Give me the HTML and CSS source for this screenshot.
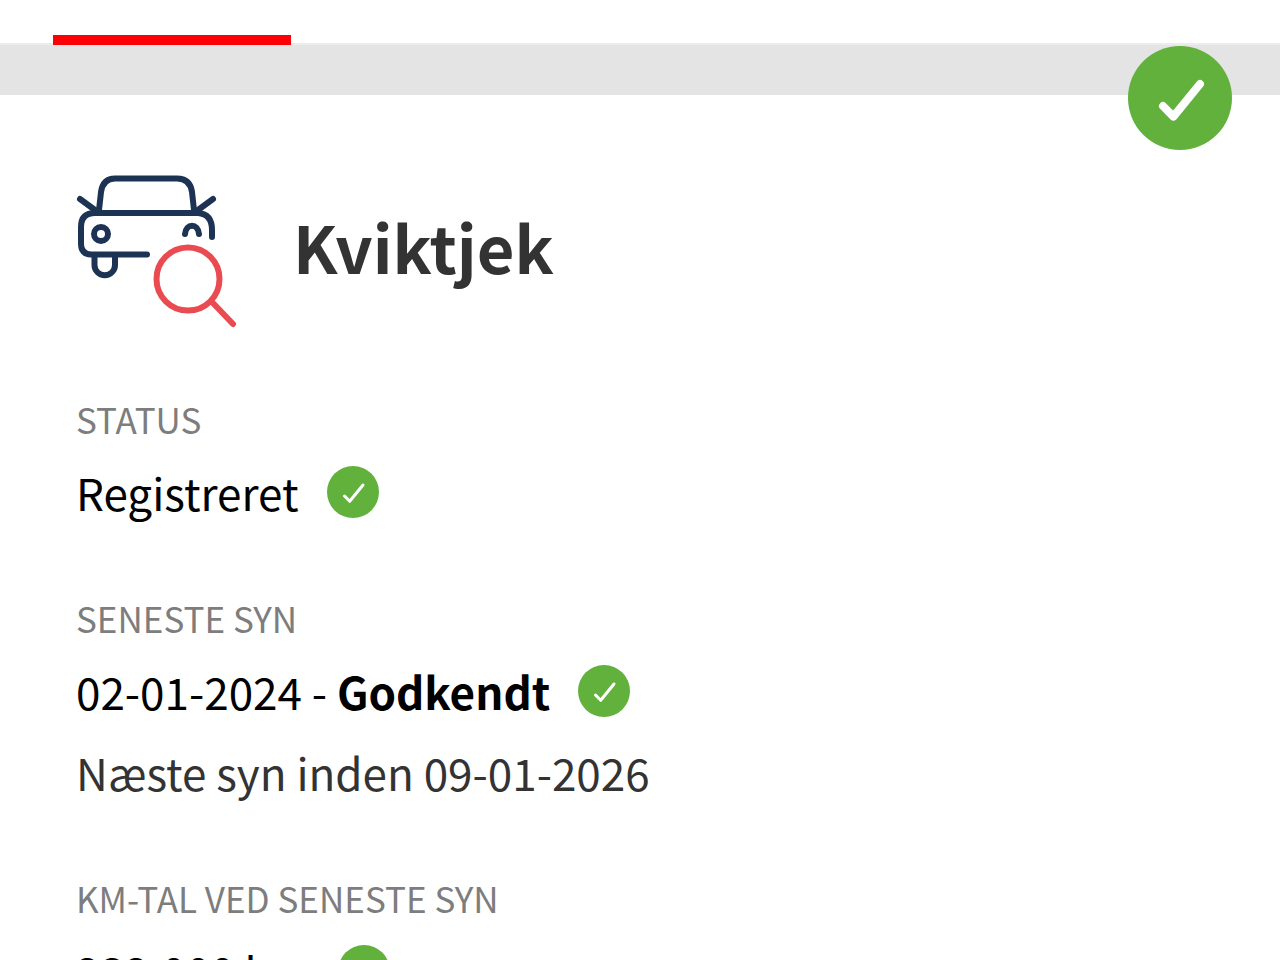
FILE: index.html
```
<!DOCTYPE html>
<html lang="da">
<head>
<meta charset="utf-8">
<meta name="viewport" content="width=device-width, initial-scale=1">
<title>Kviktjek</title>
<link rel="stylesheet" href="styles.css">
</head>
<body>
<svg class="symbols" aria-hidden="true">
  <symbol id="check" viewBox="0 0 52 52">
    <circle cx="26" cy="26" r="26"/>
    <path d="M17.5 30 L22.7 35.3 L36 19" fill="none" stroke="#fff" stroke-linecap="round" stroke-linejoin="round"/>
  </symbol>
</svg>
<div class="tabs"><div class="tab-indicator"></div></div>
<main class="card">
  <svg class="badge" role="img" aria-label="Godkendt"><use href="#check"/></svg>
  <header class="card-header">
    <svg class="car-icon" viewBox="0 0 164 156" aria-hidden="true" fill="none" stroke-linecap="round" stroke-linejoin="round" stroke-width="6">
      <g stroke="#1d3354">
        <path d="M23 38 L25 20 Q27 6.500 39 6.500 H101 Q114 6.500 116 20 L118 38"/>
        <path d="M4 27 L19 38 M137 27 L122 38"/>
        <path d="M71 82.500 H15 Q5 82 5 72 V55 Q5 41 19 41 H122 Q136 42 136 58 V65"/>
        <circle cx="25" cy="62" r="7"/>
        <path d="M109 62 C110 51 122 51 123 62"/>
        <path d="M18.500 83 V93 A10 10 0 0 0 39 93 V83"/>
      </g>
      <g stroke="#e94b50">
        <circle cx="112" cy="107" r="31.500"/>
        <path d="M136 130 L157 152"/>
      </g>
    </svg>
    <h1 class="title">Kviktjek</h1>
  </header>
  <dl class="facts">
    <div class="fact">
      <dt class="label">STATUS</dt>
      <dd class="value">Registreret <svg class="check" role="img" aria-label="OK"><use href="#check"/></svg></dd>
    </div>
    <div class="fact">
      <dt class="label">SENESTE SYN</dt>
      <dd class="value"><span>02-01-2024 - <strong>Godkendt</strong></span> <svg class="check" role="img" aria-label="OK"><use href="#check"/></svg></dd>
      <dd class="value note">Næste syn inden 09-01-2026</dd>
    </div>
    <div class="fact">
      <dt class="label">KM-TAL VED SENESTE SYN</dt>
      <dd class="value">232.000 km <svg class="check" role="img" aria-label="OK"><use href="#check"/></svg></dd>
    </div>
  </dl>
</main>
</body>
</html>
```
FILE: styles.css
```
* { box-sizing: border-box; }
html { overflow-x: hidden; }
body {
  margin: 0;
  background: #fff;
  color: #000;
  font-family: "Noto Sans CJK SC", "Noto Sans", sans-serif;
}
.symbols { position: absolute; width: 0; height: 0; }
.tabs {
  height: 95px;
  padding: 35px 53px 0;
  background: linear-gradient(#fff 43px, #ececec 43px, #ececec 45px, #e4e4e4 45px);
}
.tab-indicator { width: 238px; height: 10px; background: #fb0007; }
.card { position: relative; padding: 77px 76px 0; }
.badge {
  position: absolute;
  top: -49px;
  right: 48px;
  width: 104px;
  height: 104px;
  fill: #62b13d;
  stroke-width: 4;
}
.card-header { display: flex; align-items: center; gap: 53px; }
.car-icon { width: 164px; height: 156px; }
.title { margin: 0; padding-bottom: 8px; color: #333; font-size: 65px; line-height: 80px; font-weight: 700; }
.facts { margin: 67px 0 0; }
.fact { margin-bottom: 70px; }
.label { color: #7d7d7d; font-size: 35px; line-height: 48px; }
.value {
  display: flex;
  align-items: center;
  gap: 28px;
  margin: 17px 0 0;
  font-size: 44px;
  line-height: 64px;
}
.note { color: #333; }
.check { width: 52px; height: 52px; flex: none; fill: #62b13d; stroke-width: 3; }
```
